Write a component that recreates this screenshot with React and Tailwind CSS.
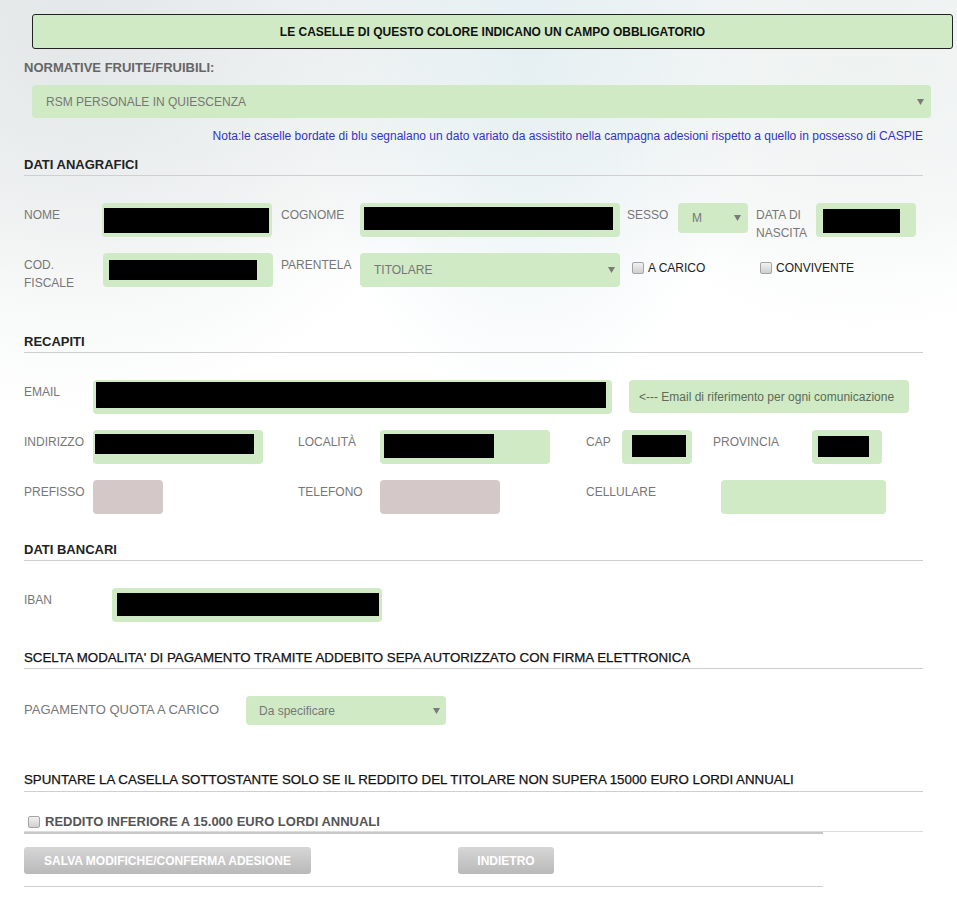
import React from 'react';

const FIELD = 'shrink-0 rounded-[4px] bg-[#cfeac5]';
const LABEL = 'shrink-0 pt-[3px] text-[12px] leading-[18px] text-[#777]';
const ROW = 'flex h-[34px] items-start';

function Caret() {
  return (
    <svg width="7" height="6" viewBox="0 0 7 6" className="shrink-0">
      <path d="M0 0h7L3.5 6z" fill="#7a7a7a" />
    </svg>
  );
}

function Redacted({ className }) {
  return <div className={`bg-black ${className}`} />;
}

function Select({ value, className, textClass = 'pl-[14px]', caretClass = 'pr-[6px]' }) {
  return (
    <div className={`${FIELD} flex items-center justify-between ${className}`}>
      <span className={`text-[12px] text-[#777] ${textClass}`}>{value}</span>
      <span className={`flex ${caretClass}`}>
        <Caret />
      </span>
    </div>
  );
}

function Checkbox() {
  return (
    <span className="inline-block h-[12px] w-[12px] shrink-0 rounded-[2px] border border-[#a4a4a4] bg-[linear-gradient(to_bottom,#f2f2f2,#cfcfcf)]" />
  );
}

function Heading({ children, strong = true, className = '' }) {
  return (
    <div
      className={`border-b border-[#cfcfcf] pb-[2px] leading-[16px] ${
        strong
          ? 'text-[13px] font-bold text-[#222]'
          : 'text-[13.3px] text-[#111] [-webkit-text-stroke:0.25px_#111]'
      } ${className}`}
    >
      {children}
    </div>
  );
}

export default function App() {
  return (
    <div className="min-h-[898px] w-full bg-[radial-gradient(ellipse_at_8%_2%,#e3e7e7_0%,transparent_32%),radial-gradient(ellipse_at_55%_6%,#e5eff2_0%,transparent_30%),radial-gradient(ellipse_at_90%_4%,#eef2f1_0%,transparent_25%),linear-gradient(to_bottom,#f2f5f5_0px,#f7f9f9_150px,#ffffff_280px)] pt-[14px] font-['Liberation_Sans',Arial,sans-serif]">
      <div className="w-[957px] pl-[24px]">
        {/* banner */}
        <div className="ml-[8px] flex h-[35px] w-[921px] items-center justify-center rounded-[3px] border border-[#222] bg-[#cfeac5] text-[12px] font-bold text-[#111]">
          LE CASELLE DI QUESTO COLORE INDICANO UN CAMPO OBBLIGATORIO
        </div>

        <div className="w-[899px]">
          <div className="mt-[11px] text-[13px] font-bold leading-[16px] text-[#666]">
            NORMATIVE FRUITE/FRUIBILI:
          </div>
          <Select
            value="RSM PERSONALE IN QUIESCENZA"
            className="ml-[8px] mt-[9px] h-[33px] w-[899px]"
            caretClass="pr-[7px]"
          />
          <div className="mt-[10px] text-right text-[12px] leading-[16px] text-[#3333cc]">
            Nota:le caselle bordate di blu segnalano un dato variato da assistito nella campagna adesioni rispetto a quello in possesso di CASPIE
          </div>

          {/* DATI ANAGRAFICI */}
          <Heading className="mt-[13px]">DATI ANAGRAFICI</Heading>

          <div className={`mt-[27px] ${ROW}`}>
            <div className={`${LABEL} w-[78px]`}>NOME</div>
            <div className={`${FIELD} h-[34px] w-[170px] pl-[2px] pt-[5px]`}>
              <Redacted className="h-[25px] w-[165px]" />
            </div>
            <div className={`${LABEL} ml-[9px] w-[79px]`}>COGNOME</div>
            <div className={`${FIELD} h-[34px] w-[260px] pl-[4px] pt-[4px]`}>
              <Redacted className="h-[23px] w-[249px]" />
            </div>
            <div className={`${LABEL} ml-[7px] w-[51px]`}>SESSO</div>
            <Select value="M" className="h-[30px] w-[70px]" textClass="pl-[14px]" caretClass="pr-[7px]" />
            <div className={`${LABEL} ml-[8px] w-[60px]`}>
              DATA DI
              <br />
              NASCITA
            </div>
            <div className={`${FIELD} h-[34px] w-[100px] pl-[7px] pt-[6px]`}>
              <Redacted className="h-[24px] w-[77px]" />
            </div>
          </div>

          <div className={`mt-[16px] ${ROW}`}>
            <div className={`${LABEL} w-[79px]`}>
              COD.
              <br />
              FISCALE
            </div>
            <div className={`${FIELD} h-[34px] w-[170px] pl-[6px] pt-[7px]`}>
              <Redacted className="h-[20px] w-[148px]" />
            </div>
            <div className={`${LABEL} ml-[8px] w-[79px]`}>PARENTELA</div>
            <Select value="TITOLARE" className="h-[34px] w-[260px]" caretClass="pr-[5px]" />
            <label className="ml-[12px] flex w-[128px] items-center gap-[4px] pt-[6px] text-[12px] text-[#222]">
              <Checkbox />
              A CARICO
            </label>
            <label className="flex items-center gap-[4px] pt-[6px] text-[12px] text-[#222]">
              <Checkbox />
              CONVIVENTE
            </label>
          </div>

          {/* RECAPITI */}
          <Heading className="mt-[47px]">RECAPITI</Heading>

          <div className={`mt-[27px] ${ROW}`}>
            <div className={`${LABEL} w-[69px]`}>EMAIL</div>
            <div className={`${FIELD} h-[34px] w-[519px] pl-[3px] pt-[2px]`}>
              <Redacted className="h-[26px] w-[510px]" />
            </div>
            <div className="ml-[17px] flex h-[33px] w-[280px] items-center rounded-[4px] bg-[#cfeac5] pl-[10px] text-[12px] text-[#5d6b57]">
              &lt;--- Email di riferimento per ogni comunicazione
            </div>
          </div>

          <div className={`mt-[16px] ${ROW}`}>
            <div className={`${LABEL} w-[69px]`}>INDIRIZZO</div>
            <div className={`${FIELD} h-[34px] w-[170px] pl-[2px] pt-[4px]`}>
              <Redacted className="h-[20px] w-[159px]" />
            </div>
            <div className={`${LABEL} ml-[35px] w-[82px]`}>LOCALITÀ</div>
            <div className={`${FIELD} h-[34px] w-[170px] pl-[4px] pt-[4px]`}>
              <Redacted className="h-[24px] w-[110px]" />
            </div>
            <div className={`${LABEL} ml-[36px] w-[36px]`}>CAP</div>
            <div className={`${FIELD} h-[34px] w-[70px] pl-[10px] pt-[5px]`}>
              <Redacted className="h-[22px] w-[54px]" />
            </div>
            <div className={`${LABEL} ml-[21px] w-[99px]`}>PROVINCIA</div>
            <div className={`${FIELD} h-[34px] w-[70px] pl-[6px] pt-[6px]`}>
              <Redacted className="h-[21px] w-[51px]" />
            </div>
          </div>

          <div className={`mt-[16px] ${ROW}`}>
            <div className={`${LABEL} w-[69px]`}>PREFISSO</div>
            <div className="h-[34px] w-[70px] shrink-0 rounded-[4px] bg-[#d5c8c8]" />
            <div className={`${LABEL} ml-[135px] w-[82px]`}>TELEFONO</div>
            <div className="h-[34px] w-[120px] shrink-0 rounded-[4px] bg-[#d5c8c8]" />
            <div className={`${LABEL} ml-[86px] w-[135px]`}>CELLULARE</div>
            <div className={`${FIELD} h-[34px] w-[165px]`} />
          </div>

          {/* DATI BANCARI */}
          <Heading className="mt-[28px]">DATI BANCARI</Heading>

          <div className={`mt-[27px] ${ROW}`}>
            <div className={`${LABEL} w-[88px]`}>IBAN</div>
            <div className={`${FIELD} h-[34px] w-[270px] pl-[5px] pt-[5px]`}>
              <Redacted className="h-[23px] w-[262px]" />
            </div>
          </div>

          <Heading strong={false} className="mt-[28px]">
            SCELTA MODALITA' DI PAGAMENTO TRAMITE ADDEBITO SEPA AUTORIZZATO CON FIRMA ELETTRONICA
          </Heading>

          <div className="mt-[27px] flex items-start">
            <div className="w-[222px] shrink-0 pt-[6px] text-[13px] leading-[16px] text-[#777]">
              PAGAMENTO QUOTA A CARICO
            </div>
            <Select value="Da specificare" className="h-[29px] w-[200px]" textClass="pl-[13px]" caretClass="pr-[6px]" />
          </div>

          <Heading strong={false} className="mt-[47px] pb-[3px]">
            SPUNTARE LA CASELLA SOTTOSTANTE SOLO SE IL REDDITO DEL TITOLARE NON SUPERA 15000 EURO LORDI ANNUALI
          </Heading>

          <label className="mt-[22px] flex items-center gap-[5px] border-b border-[#dcdcdc] pb-[1px] pl-[4px] text-[13px] font-bold leading-[16px] text-[#555]">
            <Checkbox />
            REDDITO INFERIORE A 15.000 EURO LORDI ANNUALI
          </label>

          <div className="flex w-[799px] items-center border-t-2 border-b border-t-[#c8c8c8] border-b-[#cfcfcf] pb-[12px] pt-[13px]">
            <button className="h-[27px] w-[287px] rounded-[3px] bg-[linear-gradient(to_bottom,#d6d6d6,#b9b9b9)] text-[12px] font-bold text-white">
              SALVA MODIFICHE/CONFERMA ADESIONE
            </button>
            <button className="ml-[147px] h-[27px] w-[96px] rounded-[3px] bg-[linear-gradient(to_bottom,#d6d6d6,#b9b9b9)] text-[12px] font-bold text-white">
              INDIETRO
            </button>
          </div>
        </div>
      </div>
    </div>
  );
}
